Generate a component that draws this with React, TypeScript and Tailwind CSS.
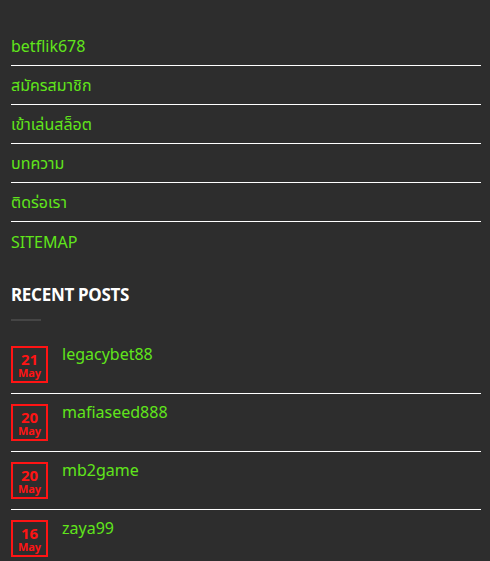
import React from "react";

const menu = ["betflik678", "สมัครสมาชิก", "เข้าเล่นสล็อต", "บทความ", "ติดร่อเรา", "SITEMAP"];
const posts = [
  { d: "21", t: "legacybet88" },
  { d: "20", t: "mafiaseed888" },
  { d: "20", t: "mb2game" },
  { d: "16", t: "zaya99" },
];

export default function App() {
  return (
    <div
      className="w-[490px] h-[561px] overflow-hidden bg-[#2d2d2d]"
      style={{ fontFamily: '"Noto Sans", "Noto Sans Thai", "Liberation Sans", sans-serif' }}
    >
      <div className="ml-[11px] w-[470px] pt-[27px]">
        {menu.map((m, i) => (
          <div
            key={i}
            className={`h-[39px] flex items-center text-[16px] text-[#60e51b] ${
              i < menu.length - 1 ? "border-b border-white" : ""
            }`}
          >
            {m}
          </div>
        ))}
        <div className="mt-[24px] text-[17px] font-bold text-white leading-[20px] tracking-[-0.3px]">
          RECENT POSTS
        </div>
        <div className="mt-[14px] w-[30px] h-[2px] bg-[#454545]" />
        <div className="mt-[25px]">
          {posts.map((p, i) => (
            <div
              key={i}
              className={`flex gap-[14px] ${i < posts.length - 1 ? "border-b border-white pb-[10px] mb-[10px]" : ""}`}
            >
              <div className="w-[37px] h-[37px] shrink-0 border-2 border-[#ff1414] flex flex-col items-center justify-center text-[#ff1414] font-bold">
                <span className="text-[15px] leading-[15px]">{p.d}</span>
                <span className="text-[11px] leading-[11px]">May</span>
              </div>
              <div className="text-[16px] text-[#60e51b] leading-[20px] -mt-[2px]">{p.t}</div>
            </div>
          ))}
        </div>
      </div>
    </div>
  );
}
